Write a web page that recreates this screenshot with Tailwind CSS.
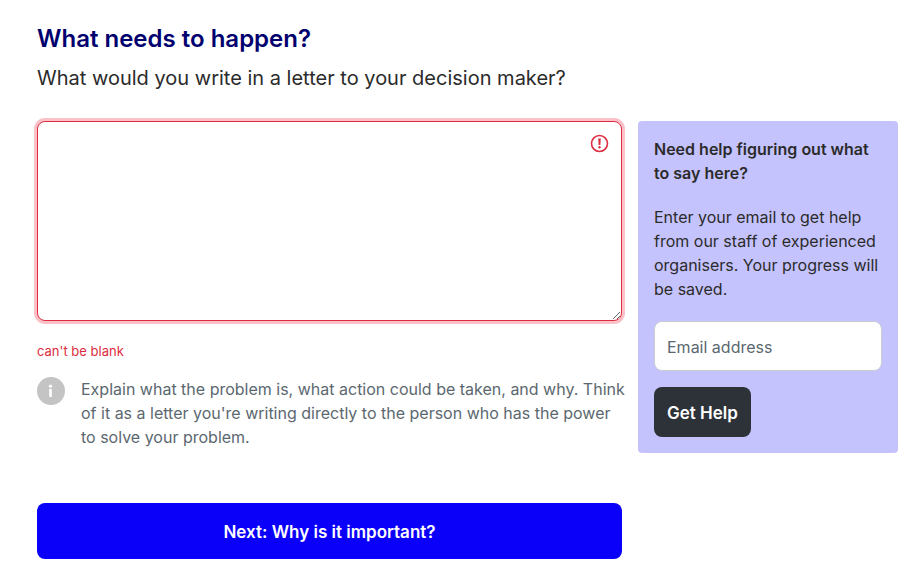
<!DOCTYPE html>
<html lang="en-GB">
<head>
  <meta charset="UTF-8" />
  <meta name="viewport" content="width=device-width, initial-scale=1.0" />
  <title>Start a petition</title>
  <script src="https://cdn.jsdelivr.net/npm/@tailwindcss/browser@4"></script>
</head>
<body class="min-h-screen bg-white pt-[23px] pr-4 pb-2 pl-[37px] font-[Inter,sans-serif] text-base text-[#2b2b2b]">
  <header class="mb-[29px]">
    <h1 class="mb-[9px] text-2xl leading-8 font-semibold text-[#00006e]">What needs to happen?</h1>
    <p class="text-xl leading-7"><label for="letter">What would you write in a letter to your decision maker?</label></p>
  </header>

  <main class="grid grid-cols-[9fr_4fr] items-start gap-x-4">
    <form id="petitionForm">
      <div class="relative">
        <textarea id="letter" aria-invalid="true" aria-describedby="letterError letterHint"
          class="block h-[200px] w-full resize rounded-lg border border-[#dc2d40] bg-white p-3 pr-12 ring-3 ring-[#fbc0c8] outline-none"></textarea>
        <svg class="pointer-events-none absolute top-3 right-3 size-5 text-[#dc2d40]" viewBox="0 0 20 20" fill="none" aria-hidden="true">
          <circle cx="9.5" cy="10.5" r="8" stroke="currentColor" stroke-width="1.6" />
          <path d="M8.2 5.6h2.6l-.4 6.4H8.6z" fill="currentColor" />
          <circle cx="9.5" cy="14.2" r="1.2" fill="currentColor" />
        </svg>
      </div>
      <p id="letterError" class="mt-5 text-[13px] leading-5 text-[#dc2d40]">can't be blank</p>
      <div class="mt-4 -mr-2 flex gap-4 text-[#5b686f]">
        <svg class="size-7 shrink-0" viewBox="0 0 28 28" aria-hidden="true">
          <circle cx="14" cy="14" r="14" fill="#c4c4c4" />
          <circle cx="13.5" cy="9.2" r="1.6" fill="#fff" />
          <path d="M12.2 12h2.6v8h-2.6z" fill="#fff" />
        </svg>
        <p id="letterHint" class="leading-6">Explain what the problem is, what action could be taken, and why. Think of it as a letter you're writing directly to the person who has the power<br /> to solve your problem.</p>
      </div>
      <button type="submit" class="mt-[54px] h-14 w-full rounded-lg bg-[#0a00fa] pt-1 text-[17px] font-semibold text-white">Next: Why is it important?</button>
    </form>

    <aside class="rounded-sm bg-[#c5c3fd] p-4">
      <h2 class="mb-5 leading-6 font-semibold">Need help figuring out what to say here?</h2>
      <p class="mb-5 leading-6">Enter your email to get help from our staff of experienced organisers. Your progress will be saved.</p>
      <form id="helpForm">
        <input type="email" id="email" placeholder="Email address" aria-label="Email address"
          class="mb-4 block h-[50px] w-full rounded-lg border border-[#c9ced1] bg-white px-3 pt-0.5 placeholder:text-[#5b686f]" />
        <button type="submit" class="block h-[50px] rounded-lg bg-[#2d3238] px-[13px] pt-1 text-[17px] font-semibold text-white">Get Help</button>
      </form>
    </aside>
  </main>
</body>
</html>
